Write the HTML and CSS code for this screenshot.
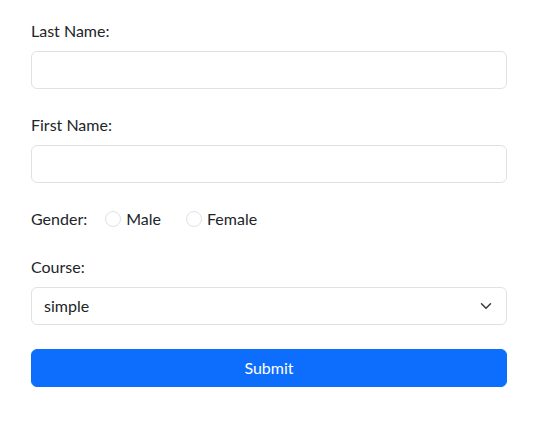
FILE: index.html
```html
<!DOCTYPE html>
<html>
<head>
<meta charset="utf-8">
<link rel="stylesheet" href="styles.css">
</head>
<body>
<form class="form">
  <div class="field">
    <label class="label" for="ln">Last Name:</label>
    <input class="control" id="ln" type="text">
  </div>
  <div class="field">
    <label class="label" for="fn">First Name:</label>
    <input class="control" id="fn" type="text">
  </div>
  <div class="field gender">
    <span class="glabel">Gender:</span>
    <label class="radio"><input type="radio" name="g"><span class="dot"></span>Male</label>
    <label class="radio"><input type="radio" name="g"><span class="dot"></span>Female</label>
  </div>
  <div class="field">
    <label class="label" for="course">Course:</label>
    <div class="select-wrap">
      <select class="control select" id="course">
        <option>simple</option>
      </select>
      <svg class="chev" viewBox="0 0 16 16" width="16" height="12" aria-hidden="true"><path d="m2 5 6 6 6-6" fill="none" stroke="#343a40" stroke-width="2" stroke-linecap="round" stroke-linejoin="round"/></svg>
    </div>
  </div>
  <button class="btn" type="button">Submit</button>
</form>
</body>
</html>
```
FILE: styles.css
```css
html, body {
  margin: 0;
  padding: 0;
  background: #fff;
}
body {
  font-family: Lato, "Noto Sans", "Liberation Sans", sans-serif;
  font-size: 16px;
  line-height: 24px;
  color: #212529;
}
.form {
  width: 476px;
  padding: 19px 0 0 31px;
  display: flex;
  flex-direction: column;
  gap: 24px;
}
.field {
  display: flex;
  flex-direction: column;
}
.label {
  margin-bottom: 8px;
}
.control {
  box-sizing: border-box;
  width: 100%;
  height: 38px;
  border: 1px solid #dee2e6;
  border-radius: 6px;
  padding: 6px 12px;
  font: inherit;
  color: #212529;
  background: #fff;
  margin: 0;
  outline: none;
}
.gender {
  flex-direction: row;
  align-items: center;
}
.glabel {
  margin-right: 18px;
}
.radio {
  display: flex;
  align-items: center;
  margin-right: 25px;
}
.radio input {
  display: none;
}
.dot {
  width: 14px;
  height: 14px;
  border: 1px solid #dee2e6;
  border-radius: 50%;
  margin-right: 5px;
  background: #fff;
}
.select-wrap {
  position: relative;
}
.select {
  appearance: none;
  -webkit-appearance: none;
}
.chev {
  position: absolute;
  right: 13px;
  top: 13px;
  pointer-events: none;
}
.btn {
  box-sizing: border-box;
  width: 100%;
  height: 38px;
  border: 1px solid #0d6efd;
  background: #0d6efd;
  color: #fff;
  border-radius: 6px;
  font: inherit;
  margin-top: 0;
  padding: 6px 12px;
}
```
